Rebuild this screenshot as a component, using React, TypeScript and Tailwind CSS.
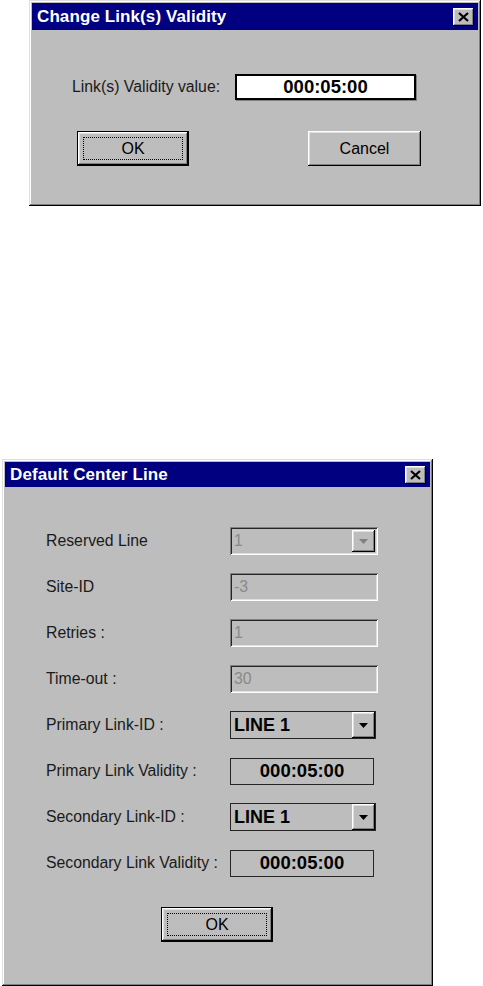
import type { ReactNode } from "react";

const raised =
  "shadow-[inset_-1px_-1px_0_#000,inset_1px_1px_0_#fff,inset_-2px_-2px_0_#808080,inset_2px_2px_0_#dfdfdf]";
const frame =
  "shadow-[inset_-1px_-1px_0_#000,inset_1px_1px_0_#dfdfdf,inset_-2px_-2px_0_#808080,inset_2px_2px_0_#fff]";
const sunken =
  "shadow-[inset_1px_1px_0_#808080,inset_-1px_-1px_0_#fff,inset_2px_2px_0_#262626,inset_-2px_-2px_0_#dfdfdf]";

function CloseBox() {
  return (
    <span className={`flex h-[18px] w-[21px] items-center justify-center bg-[#bdbdbd] ${raised}`}>
      <svg width="11" height="10" viewBox="0 0 11 10">
        <path d="M1 1 L10 9 M10 1 L1 9" stroke="#000" strokeWidth="2.2" />
      </svg>
    </span>
  );
}

function TitleBar({ title, tall }: { title: string; tall?: boolean }) {
  return (
    <div
      className={`flex items-center justify-between bg-[#000080] pl-[5px] pr-[4px] ${tall ? "h-[27px]" : "h-[25px]"}`}
    >
      <span className="text-[17px] font-bold tracking-[0.1px] text-white">{title}</span>
      <CloseBox />
    </div>
  );
}

function Button({ children, primary }: { children: ReactNode; primary?: boolean }) {
  if (primary) {
    return (
      <button className="h-[35px] w-[112px] border border-black bg-[#bdbdbd] p-0">
        <span className={`flex h-full w-full p-[5px] ${raised}`}>
          <span className="flex h-full w-full items-center justify-center border border-dotted border-black text-[16px] text-black">
            {children}
          </span>
        </span>
      </button>
    );
  }
  return (
    <button className={`flex h-[35px] w-[113px] items-center justify-center bg-[#bdbdbd] text-[16px] text-black ${raised}`}>
      {children}
    </button>
  );
}

function Arrow({ disabled }: { disabled?: boolean }) {
  return (
    <span className={`flex h-full w-[23px] items-center justify-center bg-[#bdbdbd] ${raised}`}>
      <svg width="9" height="5" viewBox="0 0 9 5">
        <path d="M0 0 H9 L4.5 5 Z" fill={disabled ? "#808080" : "#000"} />
      </svg>
    </span>
  );
}

function Field({ label, children }: { label: string; children: ReactNode }) {
  return (
    <div className="flex h-[28px] items-center">
      <span className="w-[184px] text-[15.8px] text-[#1a1a1a]">{label}</span>
      {children}
    </div>
  );
}

function DisabledInput({ value, combo }: { value: string; combo?: boolean }) {
  return (
    <div className={`flex h-[28px] w-[148px] items-center bg-[#bdbdbd] p-[2px] pl-[4px] ${sunken}`}>
      <span className="flex-1 text-[15.8px] text-[#8a8a8a]">{value}</span>
      {combo && (
        <span className="h-[22px] pr-[1px]">
          <Arrow disabled />
        </span>
      )}
    </div>
  );
}

function Combo({ value }: { value: string }) {
  return (
    <div className="flex h-[28px] w-[146px] items-center border border-[#262626] bg-[#bdbdbd]">
      <span className="flex-1 pl-[3px] text-[18px] font-bold text-black">{value}</span>
      <span className="h-full">
        <Arrow />
      </span>
    </div>
  );
}

function Validity() {
  return (
    <div className="flex h-[27px] w-[144px] items-center justify-center border border-[#262626] bg-[#bdbdbd] text-[18.5px] font-bold text-black">
      000:05:00
    </div>
  );
}

export default function App() {
  return (
    <div className="min-h-[986px] bg-white font-['Liberation_Sans',Arial,sans-serif]">
      {/* Change Link(s) Validity */}
      <div className={`ml-[29px] h-[206px] w-[452px] bg-[#bdbdbd] p-[3px] ${frame}`}>
        <TitleBar title="Change Link(s) Validity" tall />
        <div className="mt-[44px] flex items-center pl-[40px]">
          <span className="w-[163px] text-[15.8px] text-[#1a1a1a]">Link(s) Validity value:</span>
          <div className="flex h-[26px] w-[181px] items-center justify-center border-2 border-black bg-white text-[18.5px] font-bold text-black shadow-[1px_1px_0_#808080]">
            000:05:00
          </div>
        </div>
        <div className="mt-[31px] flex pl-[45px]">
          <Button primary>OK</Button>
          <span className="w-[119px]" />
          <Button>Cancel</Button>
        </div>
      </div>

      {/* Default Center Line */}
      <div className={`ml-[2px] mt-[253px] h-[527px] w-[431px] bg-[#bdbdbd] p-[3px] ${frame}`}>
        <TitleBar title="Default Center Line" />
        <div className="mt-[40px] flex flex-col gap-[18px] pl-[41px]">
          <Field label="Reserved Line">
            <DisabledInput value="1" combo />
          </Field>
          <Field label="Site-ID">
            <DisabledInput value="-3" />
          </Field>
          <Field label="Retries :">
            <DisabledInput value="1" />
          </Field>
          <Field label="Time-out :">
            <DisabledInput value="30" />
          </Field>
          <Field label="Primary Link-ID :">
            <Combo value="LINE 1" />
          </Field>
          <Field label="Primary Link Validity :">
            <Validity />
          </Field>
          <Field label="Secondary Link-ID :">
            <Combo value="LINE 1" />
          </Field>
          <Field label="Secondary Link Validity :">
            <Validity />
          </Field>
        </div>
        <div className="mt-[30px] flex pl-[156px]">
          <Button primary>OK</Button>
        </div>
      </div>
    </div>
  );
}
